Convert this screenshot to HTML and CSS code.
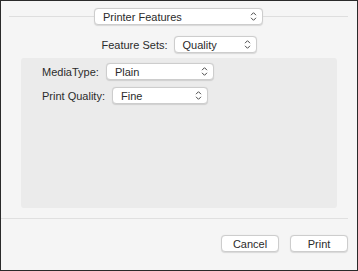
FILE: index.html
```html
<!DOCTYPE html>
<html lang="en">
<head>
    <meta charset="UTF-8">
    <meta name="viewport" content="width=device-width, initial-scale=1.0">
    <title>Print - Printer Features</title>
    <link rel="stylesheet" href="styles.css">
</head>
<body>
    <div class="dialog">
        <div class="top-row">
            <span class="rule"></span>
            <div class="popup popup-panel">
                <span>Printer Features</span>
                <svg class="chevrons" width="7" height="11" viewBox="0 0 7 11"><path d="M1 4.2 L3.5 1.7 L6 4.2 M1 6.8 L3.5 9.3 L6 6.8"/></svg>
            </div>
            <span class="rule"></span>
        </div>

        <div class="field-row centered">
            <label>Feature Sets:</label>
            <div class="popup popup-sets">
                <span>Quality</span>
                <svg class="chevrons" width="7" height="11" viewBox="0 0 7 11"><path d="M1 4.2 L3.5 1.7 L6 4.2 M1 6.8 L3.5 9.3 L6 6.8"/></svg>
            </div>
        </div>

        <div class="group-box">
            <div class="field-row">
                <label>MediaType:</label>
                <div class="popup popup-media">
                    <span>Plain</span>
                    <svg class="chevrons" width="7" height="11" viewBox="0 0 7 11"><path d="M1 4.2 L3.5 1.7 L6 4.2 M1 6.8 L3.5 9.3 L6 6.8"/></svg>
                </div>
            </div>
            <div class="field-row">
                <label>Print Quality:</label>
                <div class="popup popup-quality">
                    <span>Fine</span>
                    <svg class="chevrons" width="7" height="11" viewBox="0 0 7 11"><path d="M1 4.2 L3.5 1.7 L6 4.2 M1 6.8 L3.5 9.3 L6 6.8"/></svg>
                </div>
            </div>
        </div>

        <div class="separator"></div>

        <div class="actions">
            <button class="btn">Cancel</button>
            <button class="btn">Print</button>
        </div>
    </div>
</body>
</html>
```

FILE: styles.css
```css
* { margin: 0; padding: 0; box-sizing: border-box; }
body {
    font-family: 'Liberation Sans', Arial, sans-serif;
    font-size: 11px;
    color: #2b2b2b;
    background: #f5f5f5;
}
.dialog {
    width: 358px;
    height: 271px;
    border: 1px solid #2a2a2a;
    background: #f5f5f5;
    display: flex;
    flex-direction: column;
}
.top-row {
    display: flex;
    align-items: center;
    padding: 7px 9px 0 8px;
}
.rule {
    flex: 1;
    height: 1px;
    background: #dedede;
}
.popup {
    height: 17px;
    background: #fff;
    border: 1px solid #cdcdcd;
    border-radius: 4px;
    box-shadow: 0 0.5px 1px rgba(0, 0, 0, 0.12);
    display: flex;
    align-items: center;
    justify-content: space-between;
    padding: 0 5px 0 8px;
}
.chevrons {
    fill: none;
    stroke: #4a4a4a;
    stroke-width: 1;
}
.popup-panel { width: 169px; }
.popup-sets { width: 83px; }
.popup-media { width: 108px; }
.popup-quality { width: 96px; }
.field-row {
    display: flex;
    align-items: center;
    gap: 7px;
}
.centered {
    justify-content: center;
    margin-top: 11px;
    gap: 6px;
}
.group-box {
    margin: 5px 20px 0 20px;
    height: 150px;
    background: #ebebeb;
    border-radius: 3px;
    padding: 5px 21px;
    display: flex;
    flex-direction: column;
    gap: 7px;
}
.separator {
    height: 1px;
    background: #e0e0e0;
    margin: 10px 9px 0 0;
}
.actions {
    display: flex;
    justify-content: flex-end;
    gap: 11px;
    padding: 16px 9px 0 0;
}
.btn {
    width: 58px;
    height: 17px;
    background: #fff;
    border: 1px solid #cdcdcd;
    border-radius: 4px;
    box-shadow: 0 0.5px 1px rgba(0, 0, 0, 0.12);
    font-family: inherit;
    font-size: 11px;
    color: #2b2b2b;
}
```
